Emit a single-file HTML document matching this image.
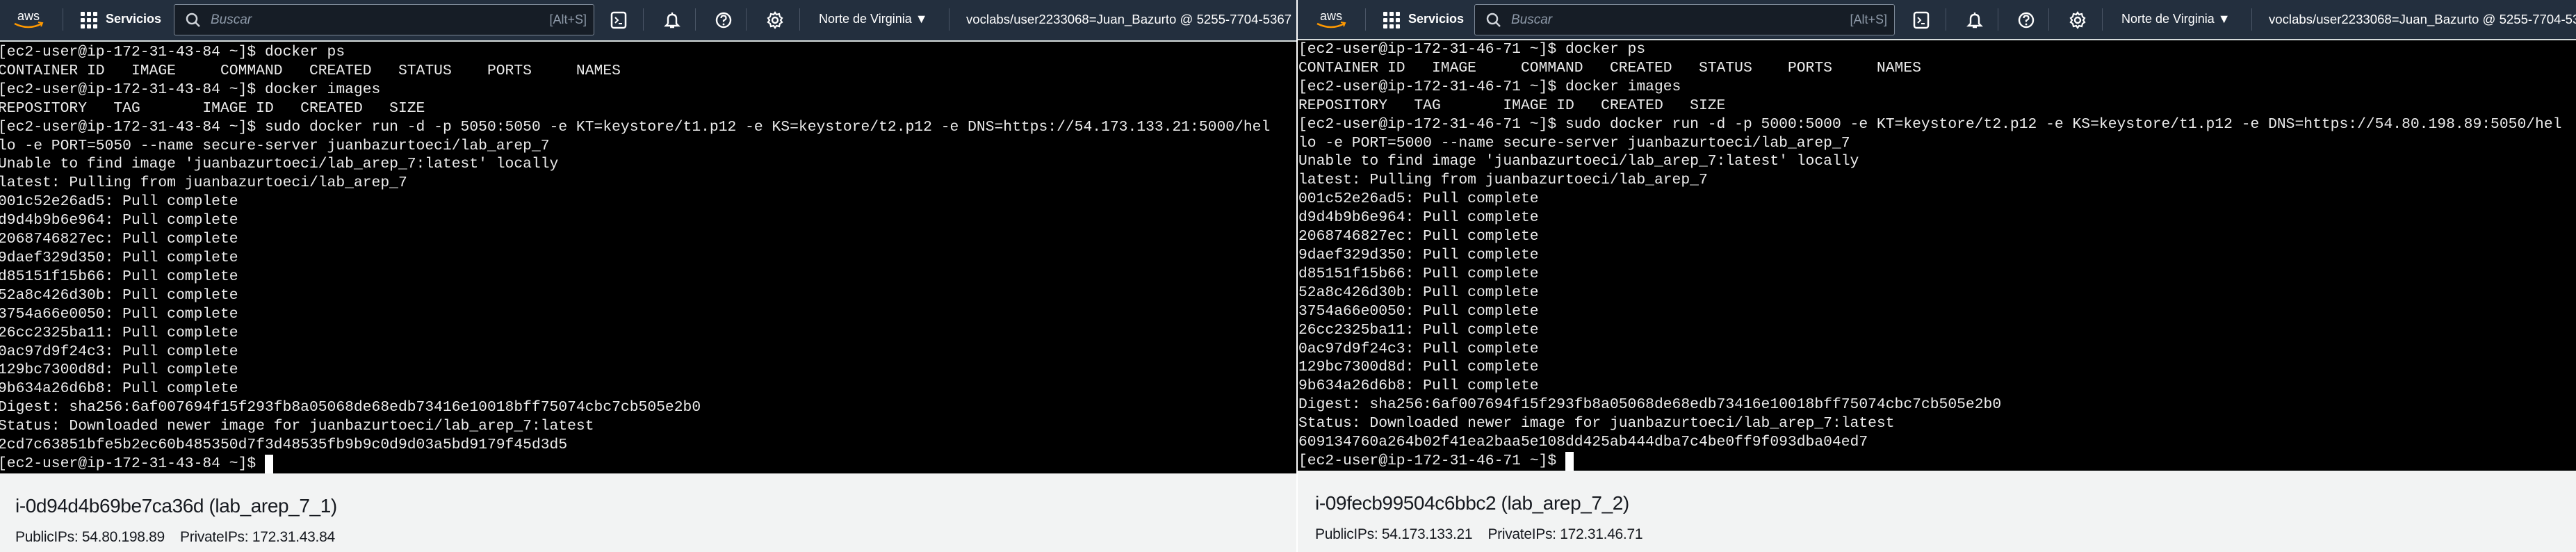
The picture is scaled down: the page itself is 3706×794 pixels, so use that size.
<!DOCTYPE html>
<html><head><meta charset="utf-8"><style>
*{margin:0;padding:0;box-sizing:border-box}
body{width:3706px;height:794px;overflow:hidden;background:#fff;position:relative;font-family:"Liberation Sans",sans-serif}
.p{position:absolute;top:0;height:794px;overflow:hidden;background:#f2f3f3}
.hd{position:absolute;left:0;top:0;right:0;background:#232f3e}
.aws{position:absolute;top:12px;left:18px;width:46px;height:32px}
.sep{position:absolute;top:12px;width:1px;height:32px;background:#4a5566}
.grid{position:absolute;left:116px;top:17px;width:24px;height:24px}
.sv{position:absolute;left:152px;top:17px;color:#fff;font-size:18px;font-weight:bold}
.sb{position:absolute;left:250px;top:6px;width:605px;height:45px;background:#161d26;border:1px solid #7d8998;border-radius:3px}
.sb .ph{position:absolute;left:52px;top:11px;color:#8d99a8;font-style:italic;font-size:19px}
.sb .k{position:absolute;right:10px;top:11px;color:#8d99a8;font-size:18px}
.ic{position:absolute;top:16px;width:24px;height:26px}
.rg{position:absolute;left:1178px;top:17px;color:#fff;font-size:18px}
.ac{position:absolute;left:1390px;top:17px;color:#fff;font-size:18.6px;white-space:nowrap}
.t{position:absolute;left:0;right:0;background:#000;overflow:hidden}
.t pre{position:absolute;font-family:"Liberation Mono",monospace;font-size:21.33px;line-height:26.9px;color:#ececec;white-space:pre}
.cur{display:inline-block;width:12px;height:27px;background:#fff;vertical-align:top}
.ti{position:absolute;left:22px;top:712px;font-size:28px;color:#16191f;letter-spacing:-0.4px}
.ip{position:absolute;left:22px;top:761px;font-size:21px;color:#16191f;letter-spacing:-0.3px}
</style></head><body>

<div class="p" style="left:0;width:1865px">
 <div class="hd" style="height:58px">
  <svg class="aws" viewBox="0 0 46 32"><text x="23" y="17" text-anchor="middle" fill="#fff" font-family="Liberation Sans" font-size="18">aws</text><path d="M3 22 Q23 32 42 22" stroke="#ff9900" stroke-width="2.6" fill="none"/><path d="M37 20 L43 21 L41 26" stroke="#ff9900" stroke-width="2" fill="none"/></svg>
  <div class="sep" style="left:90px"></div>
  <svg class="grid" viewBox="0 0 24 24" fill="#fff"><rect x="0" y="0" width="6" height="6" rx="1"/><rect x="9" y="0" width="6" height="6" rx="1"/><rect x="18" y="0" width="6" height="6" rx="1"/><rect x="0" y="9" width="6" height="6" rx="1"/><rect x="9" y="9" width="6" height="6" rx="1"/><rect x="18" y="9" width="6" height="6" rx="1"/><rect x="0" y="18" width="6" height="6" rx="1"/><rect x="9" y="18" width="6" height="6" rx="1"/><rect x="18" y="18" width="6" height="6" rx="1"/></svg>
  <div class="sv">Servicios</div>
  <div class="sb"><svg style="position:absolute;left:16px;top:11px" width="22" height="22" viewBox="0 0 22 22"><circle cx="9" cy="9" r="7" stroke="#d1d5db" stroke-width="2.5" fill="none"/><path d="M14 14 L20 20" stroke="#d1d5db" stroke-width="2.5"/></svg><span class="ph">Buscar</span><span class="k">[Alt+S]</span></div>
  <svg class="ic" style="left:878px" viewBox="0 0 24 26"><rect x="2" y="2" width="20" height="22" rx="3" stroke="#fff" stroke-width="2.5" fill="none"/><path d="M7 9 L11 13 L7 17 M12 18 H17" stroke="#fff" stroke-width="2" fill="none"/></svg>
  <div class="sep" style="left:925px"></div>
  <svg class="ic" style="left:955px" viewBox="0 0 24 26"><path d="M12 2 V4 M6 18 V11 Q6 5 12 5 Q18 5 18 11 V18 L21 21 H3 L6 18 M9 23 H15" stroke="#fff" stroke-width="2.4" fill="none"/></svg>
  <div class="sep" style="left:1000px"></div>
  <svg class="ic" style="left:1029px" viewBox="0 0 24 26"><circle cx="12" cy="13" r="10" stroke="#fff" stroke-width="2.4" fill="none"/><path d="M8.5 10 Q8.5 6.5 12 6.5 Q15.5 6.5 15.5 10 Q15.5 12 12 13.5 V15.5" stroke="#fff" stroke-width="2.2" fill="none"/><circle cx="12" cy="19" r="1.4" fill="#fff"/></svg>
  <div class="sep" style="left:1073px"></div>
  <svg class="ic" style="left:1103px" viewBox="0 0 24 26"><circle cx="12" cy="13" r="4" stroke="#fff" stroke-width="2.4" fill="none"/><path d="M12 2 L14 5 L18 4 L19 8 L22 10 L20 13 L22 16 L19 18 L18 22 L14 21 L12 24 L10 21 L6 22 L5 18 L2 16 L4 13 L2 10 L5 8 L6 4 L10 5 Z" stroke="#fff" stroke-width="2.2" fill="none"/></svg>
  <div class="sep" style="left:1150px"></div>
  <div class="rg">Norte de Virginia ▼</div>
  <div class="sep" style="left:1365px"></div>
  <div class="ac">voclabs/user2233068=Juan_Bazurto @ 5255-7704-5367</div>
 </div>
 <div style="position:absolute;left:0;right:0;top:58px;height:2px;background:#d5dbdb"></div>
 <div class="t" style="top:60px;height:621px"><pre style="left:-3px;top:2px">[ec2-user@ip-172-31-43-84 ~]$ docker ps
CONTAINER ID   IMAGE     COMMAND   CREATED   STATUS    PORTS     NAMES
[ec2-user@ip-172-31-43-84 ~]$ docker images
REPOSITORY   TAG       IMAGE ID   CREATED   SIZE
[ec2-user@ip-172-31-43-84 ~]$ sudo docker run -d -p 5050:5050 -e KT=keystore/t1.p12 -e KS=keystore/t2.p12 -e DNS=https://54.173.133.21:5000/hel
lo -e PORT=5050 --name secure-server juanbazurtoeci/lab_arep_7
Unable to find image 'juanbazurtoeci/lab_arep_7:latest' locally
latest: Pulling from juanbazurtoeci/lab_arep_7
001c52e26ad5: Pull complete
d9d4b9b6e964: Pull complete
2068746827ec: Pull complete
9daef329d350: Pull complete
d85151f15b66: Pull complete
52a8c426d30b: Pull complete
3754a66e0050: Pull complete
26cc2325ba11: Pull complete
0ac97d9f24c3: Pull complete
129bc7300d8d: Pull complete
9b634a26d6b8: Pull complete
Digest: sha256:6af007694f15f293fb8a05068de68edb73416e10018bff75074cbc7cb505e2b0
Status: Downloaded newer image for juanbazurtoeci/lab_arep_7:latest
2cd7c63851bfe5b2ec60b485350d7f3d48535fb9b9c0d9d03a5bd9179f45d3d5
[ec2-user@ip-172-31-43-84 ~]$ <span class="cur"></span></pre></div>
 <div class="ti">i-0d94d4b69be7ca36d (lab_arep_7_1)</div>
 <div class="ip">PublicIPs: 54.80.198.89&nbsp;&nbsp;&nbsp;&nbsp;PrivateIPs: 172.31.43.84</div>
</div>

<div style="position:absolute;left:1865px;top:0;width:2px;height:794px;background:#fff"></div>

<div class="p" style="left:1867px;width:1839px">
 <div class="hd" style="height:56px">
  <svg class="aws" style="left:25px" viewBox="0 0 46 32"><text x="23" y="17" text-anchor="middle" fill="#fff" font-family="Liberation Sans" font-size="18">aws</text><path d="M3 22 Q23 32 42 22" stroke="#ff9900" stroke-width="2.6" fill="none"/><path d="M37 20 L43 21 L41 26" stroke="#ff9900" stroke-width="2" fill="none"/></svg>
  <div class="sep" style="left:97px"></div>
  <svg class="grid" style="left:123px" viewBox="0 0 24 24" fill="#fff"><rect x="0" y="0" width="6" height="6" rx="1"/><rect x="9" y="0" width="6" height="6" rx="1"/><rect x="18" y="0" width="6" height="6" rx="1"/><rect x="0" y="9" width="6" height="6" rx="1"/><rect x="9" y="9" width="6" height="6" rx="1"/><rect x="18" y="9" width="6" height="6" rx="1"/><rect x="0" y="18" width="6" height="6" rx="1"/><rect x="9" y="18" width="6" height="6" rx="1"/><rect x="18" y="18" width="6" height="6" rx="1"/></svg>
  <div class="sv" style="left:159px">Servicios</div>
  <div class="sb" style="left:254px"><svg style="position:absolute;left:16px;top:11px" width="22" height="22" viewBox="0 0 22 22"><circle cx="9" cy="9" r="7" stroke="#d1d5db" stroke-width="2.5" fill="none"/><path d="M14 14 L20 20" stroke="#d1d5db" stroke-width="2.5"/></svg><span class="ph">Buscar</span><span class="k">[Alt+S]</span></div>
  <svg class="ic" style="left:885px" viewBox="0 0 24 26"><rect x="2" y="2" width="20" height="22" rx="3" stroke="#fff" stroke-width="2.5" fill="none"/><path d="M7 9 L11 13 L7 17 M12 18 H17" stroke="#fff" stroke-width="2" fill="none"/></svg>
  <div class="sep" style="left:932px"></div>
  <svg class="ic" style="left:962px" viewBox="0 0 24 26"><path d="M12 2 V4 M6 18 V11 Q6 5 12 5 Q18 5 18 11 V18 L21 21 H3 L6 18 M9 23 H15" stroke="#fff" stroke-width="2.4" fill="none"/></svg>
  <div class="sep" style="left:1007px"></div>
  <svg class="ic" style="left:1036px" viewBox="0 0 24 26"><circle cx="12" cy="13" r="10" stroke="#fff" stroke-width="2.4" fill="none"/><path d="M8.5 10 Q8.5 6.5 12 6.5 Q15.5 6.5 15.5 10 Q15.5 12 12 13.5 V15.5" stroke="#fff" stroke-width="2.2" fill="none"/><circle cx="12" cy="19" r="1.4" fill="#fff"/></svg>
  <div class="sep" style="left:1080px"></div>
  <svg class="ic" style="left:1110px" viewBox="0 0 24 26"><circle cx="12" cy="13" r="4" stroke="#fff" stroke-width="2.4" fill="none"/><path d="M12 2 L14 5 L18 4 L19 8 L22 10 L20 13 L22 16 L19 18 L18 22 L14 21 L12 24 L10 21 L6 22 L5 18 L2 16 L4 13 L2 10 L5 8 L6 4 L10 5 Z" stroke="#fff" stroke-width="2.2" fill="none"/></svg>
  <div class="sep" style="left:1157px"></div>
  <div class="rg" style="left:1185px">Norte de Virginia ▼</div>
  <div class="sep" style="left:1372px"></div>
  <div class="ac" style="left:1397px">voclabs/user2233068=Juan_Bazurto @ 5255-7704-5367</div>
 </div>
 <div style="position:absolute;left:0;right:0;top:56px;height:2px;background:#d5dbdb"></div>
 <div class="t" style="top:58px;height:619px"><pre style="left:1px;top:0px">[ec2-user@ip-172-31-46-71 ~]$ docker ps
CONTAINER ID   IMAGE     COMMAND   CREATED   STATUS    PORTS     NAMES
[ec2-user@ip-172-31-46-71 ~]$ docker images
REPOSITORY   TAG       IMAGE ID   CREATED   SIZE
[ec2-user@ip-172-31-46-71 ~]$ sudo docker run -d -p 5000:5000 -e KT=keystore/t2.p12 -e KS=keystore/t1.p12 -e DNS=https://54.80.198.89:5050/hel
lo -e PORT=5000 --name secure-server juanbazurtoeci/lab_arep_7
Unable to find image 'juanbazurtoeci/lab_arep_7:latest' locally
latest: Pulling from juanbazurtoeci/lab_arep_7
001c52e26ad5: Pull complete
d9d4b9b6e964: Pull complete
2068746827ec: Pull complete
9daef329d350: Pull complete
d85151f15b66: Pull complete
52a8c426d30b: Pull complete
3754a66e0050: Pull complete
26cc2325ba11: Pull complete
0ac97d9f24c3: Pull complete
129bc7300d8d: Pull complete
9b634a26d6b8: Pull complete
Digest: sha256:6af007694f15f293fb8a05068de68edb73416e10018bff75074cbc7cb505e2b0
Status: Downloaded newer image for juanbazurtoeci/lab_arep_7:latest
609134760a264b02f41ea2baa5e108dd425ab444dba7c4be0ff9f093dba04ed7
[ec2-user@ip-172-31-46-71 ~]$ <span class="cur"></span></pre></div>
 <div class="ti" style="left:25px;top:708px">i-09fecb99504c6bbc2 (lab_arep_7_2)</div>
 <div class="ip" style="left:25px;top:757px">PublicIPs: 54.173.133.21&nbsp;&nbsp;&nbsp;&nbsp;PrivateIPs: 172.31.46.71</div>
</div>
</body></html>
